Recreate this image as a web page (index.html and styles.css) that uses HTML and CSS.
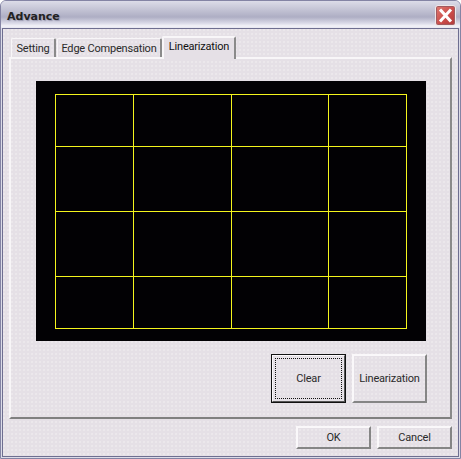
FILE: index.html
```html
<!DOCTYPE html>
<html lang="en">
<head>
<meta charset="utf-8">
<title>Advance</title>
<link rel="stylesheet" href="styles.css">
</head>
<body>
<div class="window">
  <header class="titlebar">
    <span class="title">Advance</span>
    <span class="close">
      <svg width="21" height="21" viewBox="0 0 21 21" aria-hidden="true">
        <path d="M6 5.5 L15 15.5 M15 5.5 L6 15.5" stroke="#fff" stroke-width="3" stroke-linecap="square" fill="none"/>
      </svg>
    </span>
  </header>
  <div class="client">
    <nav class="tabs">
      <span class="tab tab-setting">Setting</span>
      <span class="tab tab-edge">Edge Compensation</span>
      <span class="tab tab-active">Linearization</span>
    </nav>
    <section class="panel">
      <svg class="plot" width="390" height="260" viewBox="0 0 390 260" aria-hidden="true">
        <rect width="390" height="260" fill="#020104"/>
        <g stroke="#f4f41c" stroke-width="1" fill="none">
          <rect x="19.5" y="13.5" width="351" height="234"/>
          <path d="M97.5 13.5V247.5M195.5 13.5V247.5M292.5 13.5V247.5M19.5 65.5H370.5M19.5 130.5H370.5M19.5 195.5H370.5"/>
        </g>
      </svg>
      <div class="panel-actions">
        <button class="btn btn-large btn-default" type="button"><span class="focus">Clear</span></button>
        <button class="btn btn-large" type="button">Linearization</button>
      </div>
    </section>
    <footer class="footer">
      <button class="btn btn-small" type="button">OK</button>
      <button class="btn btn-small" type="button">Cancel</button>
    </footer>
  </div>
</div>
</body>
</html>
```

FILE: styles.css
```css
* {
  box-sizing: border-box;
}

html,
body {
  margin: 0;
  width: 461px;
  height: 459px;
  overflow: hidden;
  background: #fff;
}

body {
  font-family: Roboto, "Liberation Sans", Arial, sans-serif;
  font-size: 11px;
  letter-spacing: -0.2px;
  color: #2a2a2a;
}

.window {
  width: 461px;
  height: 459px;
  display: flex;
  flex-direction: column;
  border: 1px solid #8484a4;
  border-radius: 6px 6px 0 0;
  background: #dcdce8;
  overflow: hidden;
}

.titlebar {
  height: 27px;
  flex: none;
  display: flex;
  align-items: flex-start;
  justify-content: space-between;
  padding: 4px 4px 0 6px;
  background: linear-gradient(#dcdce8 0, #c8c8d8 7px, #aeaec4 16px, #d8d8e6 22px, #f2f2f8 25px, #e6e6f0 27px);
}

.title {
  margin-top: 5px;
  font-family: "DejaVu Sans", sans-serif;
  font-weight: bold;
  font-size: 11px;
  line-height: 13px;
  letter-spacing: 0;
  color: #222;
  text-shadow: 1px 1px 1px #9a9ab0;
}

.close {
  width: 21px;
  height: 21px;
  display: block;
  border: 1px solid #f0e8e8;
  border-radius: 3px;
  background: linear-gradient(135deg, #e07a70, #c84a48 60%, #b03a3a);
  box-shadow: 0 0 0 1px #a05a60 inset;
}

.close svg {
  display: block;
  margin: -1px;
}

.client {
  flex: 1;
  display: flex;
  flex-direction: column;
  margin: 0 1px 1px 1px;
  padding: 7px 6px 0 6px;
  border: 1px solid #6e6e90;
  background-color: #e5e0e6;
  background-image: radial-gradient(circle at 1px 1px, #ece8ec 0.7px, transparent 1px);
  background-size: 4px 4px;
}

.tabs {
  height: 21px;
  flex: none;
  display: flex;
  align-items: flex-end;
  padding-left: 2px;
  gap: 1px;
}

.tab {
  height: 19px;
  display: flex;
  align-items: center;
  justify-content: center;
  border-top: 1px solid #f8f6f8;
  border-left: 1px solid #f8f6f8;
  border-right: 2px solid #8a8a8a;
  border-radius: 2px 2px 0 0;
  white-space: nowrap;
}

.tab-setting {
  width: 45px;
}

.tab-edge {
  width: 105px;
}

.tab-active {
  width: 74px;
  height: 23px;
  margin-left: -1px;
  margin-bottom: -2px;
  padding-bottom: 5px;
  border-top-width: 2px;
  border-left-width: 2px;
  position: relative;
  z-index: 1;
  color: #111;
  background-color: #e5e0e6;
}

.panel {
  width: 443px;
  height: 362px;
  flex: none;
  display: flex;
  flex-direction: column;
  align-items: flex-start;
  padding: 22px 0 0 25px;
  border-top: 2px solid #f8f6f8;
  border-left: 2px solid #f8f6f8;
  border-right: 2px solid #8a8a8a;
  border-bottom: 2px solid #808080;
}

.plot {
  display: block;
  flex: none;
}

.panel-actions {
  display: flex;
  gap: 6px;
  margin: 13px 0 0 235px;
}

.btn {
  padding: 0;
  font: inherit;
  letter-spacing: inherit;
  color: #2a2a2a;
  background: transparent;
  border-top: 2px solid #faf8fa;
  border-left: 2px solid #faf8fa;
  border-right: 2px solid #858585;
  border-bottom: 2px solid #858585;
  border-radius: 0;
}

.btn-large {
  width: 75px;
  height: 49px;
}

.btn-small {
  width: 75px;
  height: 23px;
}

.btn-default {
  outline: 1px solid #111;
  outline-offset: -1px;
  border-right-color: #555;
  border-bottom-color: #555;
  padding: 2px;
}

.focus {
  display: flex;
  align-items: center;
  justify-content: center;
  height: 100%;
  border: 1px dotted #111;
}

.footer {
  display: flex;
  justify-content: flex-end;
  gap: 6px;
  margin-top: 7px;
}
```
